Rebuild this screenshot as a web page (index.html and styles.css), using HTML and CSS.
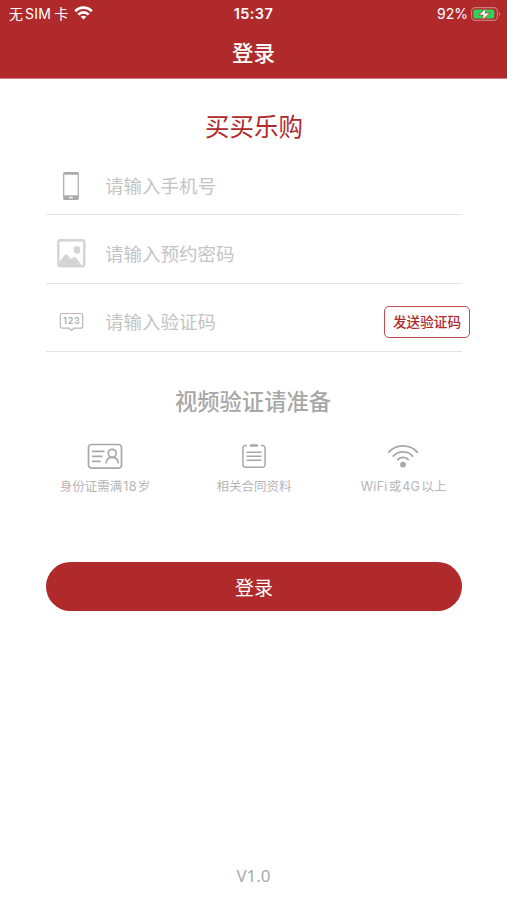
FILE: index.html
```html
<!DOCTYPE html>
<html lang="zh-CN">
<head>
    <meta charset="UTF-8">
    <meta name="viewport" content="width=device-width, initial-scale=1.0">
    <title>登录</title>
    <link rel="stylesheet" href="styles.css">
</head>
<body>

    <header class="header">
        <!-- Status bar -->
        <div class="status-bar">
            <div class="status-left">
                <span class="carrier">无<span class="sim">SIM</span>卡</span>
                <svg class="status-wifi" width="19" height="14" viewBox="0 0 19 14" fill="none" stroke="#fff" stroke-width="2.7">
                    <path d="M1.2 5.3C5.8.5 13.2.5 17.8 5.3"/>
                    <path d="M4.3 8.6c3-2.9 7.4-2.9 10.4 0"/>
                    <path d="M9.5 13.6 6.7 10.8c1.6-1.5 4-1.5 5.6 0z" fill="#fff" stroke="none"/>
                </svg>
            </div>
            <div class="status-time">15:37</div>
            <div class="status-right">
                <span>92%</span>
                <svg width="30" height="14" viewBox="0 0 30 14">
                    <rect x=".6" y=".6" width="25.8" height="12.8" rx="3.6" fill="none" stroke="#d07a7a" stroke-width="1.1"/>
                    <rect x="2.4" y="2.4" width="21" height="9.2" rx="2" fill="#35cf5b"/>
                    <path d="M28 4.8c1.7.8 1.7 3.6 0 4.4z" fill="#d07a7a"/>
                    <path d="M15.2 1 7.600 8h4.6l-1.2 5.200L19 6H14z" fill="#fff" stroke="#b02a2b" stroke-width=".7"/>
                </svg>
            </div>
        </div>
        <h1 class="nav-title">登录</h1>
    </header>

    <main class="content">
        <h2 class="brand">买买乐购</h2>

        <!-- Login fields -->
        <form class="login-form">
            <div class="field field-phone">
                <svg class="field-icon" width="30" height="30" viewBox="0 0 30 30">
                    <rect x="7.1" y="1" width="15.8" height="28" rx="1.6" fill="#aaa"/>
                    <rect x="8.3" y="3.7" width="13.4" height="20.6" fill="#fff"/>
                    <rect x="13" y="25.7" width="4" height="1.8" rx=".7" fill="#eee"/>
                </svg>
                <input type="text" placeholder="请输入手机号">
            </div>

            <div class="field field-password">
                <svg class="field-icon" width="30" height="30" viewBox="0 0 30 30">
                    <rect x="2.300" y="1.300" width="26" height="26" rx="2.2" fill="#fff" stroke="#d4d4d4" stroke-width="2.400"/>
                    <ellipse cx="21" cy="10.800" rx="3.3" ry="3.900" fill="#d4d4d4"/>
                    <path d="M3 23.500C5.500 20.500 7.500 16.500 9.800 15.200c2.200-.5 3.400 3.700 5 4.800 1.600-.3 2.400-2.400 4-1.900 2.600 1.100 3.400 4.600 6.200 7V27H3z" fill="#d4d4d4"/>
                </svg>
                <input type="text" placeholder="请输入预约密码">
            </div>

            <div class="field field-code">
                <svg class="field-icon" width="30" height="30" viewBox="0 0 30 30">
                    <path d="M6.300 6.500h18.400a2 2 0 0 1 2 2v10.700a2 2 0 0 1-2 2h-6.600l-2.600 2.300-2.600-2.300H6.300a2 2 0 0 1-2-2V8.500a2 2 0 0 1 2-2z" fill="none" stroke="#b8b8b8" stroke-width="1.200"/>
                    <text class="digits" x="16" y="17" text-anchor="middle">123</text>
                </svg>
                <input type="text" placeholder="请输入验证码">
                <button type="button" class="send-button">发送验证码</button>
            </div>
        </form>

        <!-- What to prepare for the video check -->
        <h3 class="prepare-title">视频验证请准备</h3>
        <div class="prepare-list">
            <div class="prepare-item">
                <svg width="36" height="28" viewBox="0 0 36 28" fill="none" stroke="#a8a8a8" stroke-width="1.700">
                    <rect x="1.500" y="2.500" width="33" height="23.600" rx="3"/>
                    <path d="M5 9.300h12.500M5 14.300h10.500M5 19.300h8.500"/>
                    <circle cx="25.200" cy="11.300" r="4"/>
                    <path d="M19 21.500c.3-4 2.800-6.200 6.200-6.200s5.900 2.200 6.200 6.200"/>
                </svg>
                <span>身份证需满<span class="latin">18</span>岁</span>
            </div>
            <div class="prepare-item">
                <svg width="36" height="28" viewBox="0 0 36 28" fill="none" stroke="#a8a8a8" stroke-width="1.500">
                    <path d="M11 3.400H9.500a2.600 2.600 0 0 0-2.600 2.600v16.600a2.600 2.600 0 0 0 2.600 2.600h17a2.600 2.600 0 0 0 2.600-2.600V6a2.600 2.600 0 0 0-2.600-2.600H25"/>
                    <path d="M15 3.500h6" stroke-width="2.600" stroke-linecap="round"/>
                    <path d="M10.500 10.300h15M10.500 14.300h15M10.500 18.300h15"/>
                </svg>
                <span>相关合同资料</span>
            </div>
            <div class="prepare-item">
                <svg width="36" height="28" viewBox="0 0 36 28" fill="none" stroke="#a8a8a8" stroke-width="1.800">
                    <path d="M3.200 10.600c8-9 21.600-9 29.600 0"/>
                    <path d="M7.800 14.600c5.500-6.400 14.900-6.400 20.400 0"/>
                    <path d="M12.300 18.200c3-3.700 8.400-3.700 11.400 0"/>
                    <circle cx="18" cy="22.600" r="2.900" fill="#a8a8a8" stroke="none"/>
                </svg>
                <span><span class="latin">WiFi</span>或<span class="latin">4G</span>以上</span>
            </div>
        </div>

        <button type="button" class="login-button">登录</button>
    </main>

    <footer class="version">V1.0</footer>

</body>
</html>
```
FILE: styles.css
```css
* {
    box-sizing: border-box;
}

body {
    margin: 0;
    height: 900px;
    display: flex;
    flex-direction: column;
    font-family: Inter, "Noto Sans CJK SC", sans-serif;
    background-color: #fff;
    overflow: hidden;
}

h1, h2, h3 {
    margin: 0;
}

button, input {
    font-family: "Noto Sans CJK SC", sans-serif;
    padding: 0;
}

.header {
    height: 79px;
    background-color: #b02a2b;
    border-bottom: 1px solid #d77f82;
    color: #fff;
}

.status-bar {
    display: grid;
    grid-template-columns: 1fr auto 1fr;
    align-items: center;
    height: 28px;
    padding: 0 6px 0 9px;
    font-size: 14px;
    line-height: 28px;
}

.status-left, .status-right {
    display: flex;
    align-items: center;
}

.status-left {
    gap: 6px;
}

.status-right {
    justify-content: flex-end;
    gap: 3px;
}

.sim {
    margin: 0 3px 0 2px;
    letter-spacing: 0.3px;
}

.status-wifi {
    margin-top: -3px;
}

.status-time {
    margin-right: 3px;
    font-size: 14.5px;
    font-weight: 600;
    letter-spacing: 0.4px;
}

.nav-title {
    font-size: 21.5px;
    font-weight: 500;
    line-height: 30px;
    margin-top: 10px;
    text-align: center;
}

.content {
    padding: 0 45px 0 46px;
}

.brand {
    margin-top: 28px;
    line-height: 40px;
    font-size: 24.5px;
    font-weight: 400;
    color: #b02a2b;
    text-align: center;
}

.field {
    display: flex;
    align-items: center;
    border-bottom: 1px solid #e4e4e4;
}

.field-phone {
    height: 68px;
    padding-top: 11px;
}

.field-password {
    height: 69px;
    padding-top: 9px;
}

.field-code {
    height: 68px;
    padding-top: 9px;
}

.field-icon {
    flex: none;
    margin: 0 19px 0 10px;
}

.field input {
    flex: 1;
    min-width: 0;
    height: 30px;
    margin-bottom: 2px;
    border: none;
    outline: none;
    background: none;
    font-size: 18.5px;
}

.field input::placeholder {
    color: #c4c4c4;
}

.digits {
    font-family: Inter, sans-serif;
    font-size: 8.5px;
    font-weight: 600;
    letter-spacing: 1px;
    fill: #a8a8a8;
}

.send-button {
    flex: none;
    width: 86px;
    height: 32px;
    margin-right: -8px;
    padding-bottom: 2px;
    border: 1.5px solid #c04a4c;
    border-radius: 5px;
    background-color: #fff;
    color: #b02a2b;
    font-size: 13.6px;
    font-weight: 500;
}

.prepare-title {
    margin-top: 34px;
    margin-right: 2px;
    line-height: 32px;
    font-size: 22.3px;
    font-weight: 500;
    color: #a8a8a8;
    text-align: center;
}

.prepare-list {
    display: flex;
    justify-content: space-between;
    margin: 24px -15px 0;
}

.prepare-item {
    width: 148px;
    display: flex;
    flex-direction: column;
    align-items: center;
    font-size: 12.5px;
    line-height: 20px;
    color: #b6b6b6;
    gap: 7px;
}

.latin {
    margin: 0 1px;
    letter-spacing: 0.3px;
}

.login-button {
    display: block;
    width: 100%;
    height: 49px;
    margin-top: 65px;
    border: none;
    border-radius: 25px;
    background-color: #b02a2b;
    color: #fff;
    font-size: 19px;
}

.version {
    margin-top: auto;
    margin-bottom: 12px;
    line-height: 24px;
    font-family: "Noto Sans", sans-serif;
    font-size: 17px;
    color: #aaa;
    text-align: center;
}
```
